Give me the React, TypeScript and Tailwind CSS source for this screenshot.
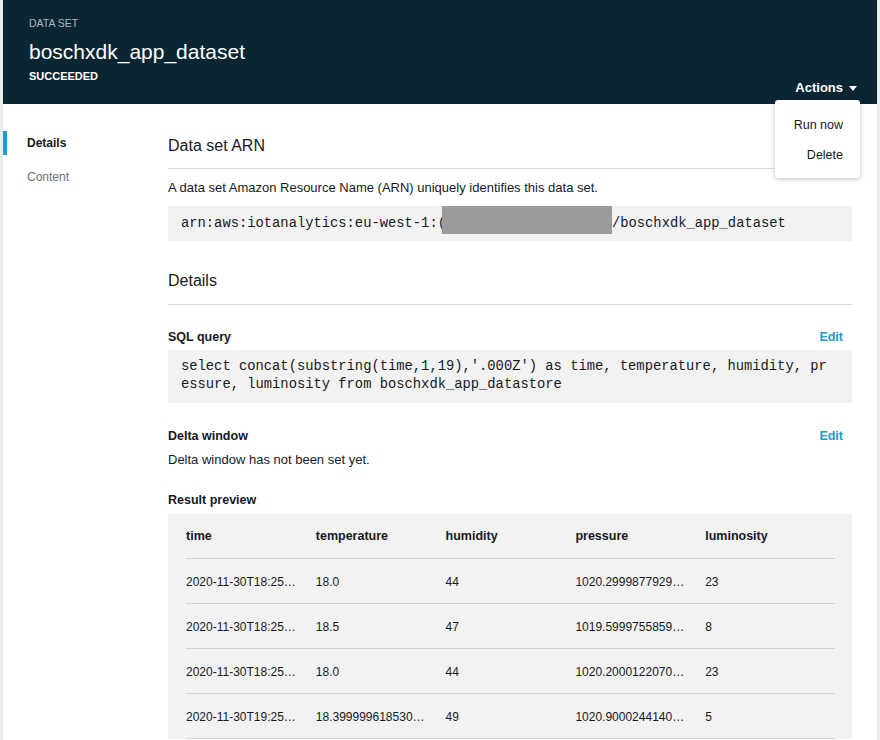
import React from "react";

const rows = [
  ["2020-11-30T18:25…", "18.0", "44", "1020.2999877929…", "23"],
  ["2020-11-30T18:25…", "18.5", "47", "1019.5999755859…", "8"],
  ["2020-11-30T18:25…", "18.0", "44", "1020.2000122070…", "23"],
  ["2020-11-30T19:25…", "18.399999618530…", "49", "1020.9000244140…", "5"],
];

const mono = { fontFamily: '"Liberation Mono", "Courier New", monospace' };

export default function App() {
  const sans = { fontFamily: '"Liberation Sans", Arial, sans-serif' };
  return (
    <div className="min-h-[740px] bg-[#eaeded] px-[3px] text-[#16191f]" style={sans}>
      <div className="relative min-h-[740px] bg-white">
        {/* Header */}
        <div className="relative h-[104px] bg-[#0b2633] pl-[26px] pr-[20px]">
          <div className="pt-[16px] text-[10.5px] leading-[14px] text-[#aab7b8]">DATA SET</div>
          <div className="mt-[8px] text-[21px] leading-[28px] text-white">boschxdk_app_dataset</div>
          <div className="mt-[3px] text-[11px] font-bold leading-[14px] text-white">SUCCEEDED</div>
          <div className="absolute bottom-[7px] right-[20px] flex items-center gap-[6px] text-[13px] font-bold leading-[18px] text-white">
            <span>Actions</span>
            <svg width="8" height="5" viewBox="0 0 8 5"><path d="M0 0h8L4 5z" fill="#fff" /></svg>
          </div>
        </div>

        {/* Dropdown menu */}
        <div className="absolute left-[772px] top-[100px] z-10 flex w-[85px] flex-col items-end rounded-[3px] bg-white pr-[17px] pt-[16px] pb-[14px] text-[12.5px] leading-[18px] shadow-[0_1px_5px_rgba(0,0,0,0.25)]">
          <div>Run now</div>
          <div className="mt-[12px]">Delete</div>
        </div>

        <div className="flex">
          {/* Side nav */}
          <div className="w-[165px] shrink-0 pt-[27px]">
            <div className="flex h-[24px] items-center">
              <div className="h-[24px] w-[4px] bg-[#1b9ccf]" />
              <span className="ml-[20px] text-[12px] font-bold">Details</span>
            </div>
            <div className="ml-[24px] mt-[13px] text-[12px] leading-[18px] text-[#687078]">Content</div>
          </div>

          {/* Main */}
          <div className="min-w-0 flex-1 pr-[25px] pt-[31px]">
            <div className="border-b border-[#d5dbdb] pb-[11px] text-[16px] leading-[22px]">Data set ARN</div>
            <div className="mt-[10px] text-[13px] leading-[18px]">
              A data set Amazon Resource Name (ARN) uniquely identifies this data set.
            </div>
            <div className="mt-[9px] flex h-[35px] items-center bg-[#f2f2f2] px-[13px] text-[13.8px] leading-[17px]" style={mono}>
              <span className="whitespace-pre">arn:aws:iotanalytics:eu-west-1:(</span>
              <span className="-ml-[4px] h-[28px] w-[170px] self-start bg-[#9b9b9b]" />
              <span className="whitespace-pre">/boschxdk_app_dataset</span>
            </div>

            <div className="mt-[29px] border-b border-[#d5dbdb] pb-[12px] text-[16px] leading-[22px]">Details</div>

            <div className="mt-[23px] flex items-center justify-between pr-[9px] text-[12.5px] leading-[18px]">
              <span className="font-bold">SQL query</span>
              <span className="font-bold text-[#1b9ccf]">Edit</span>
            </div>
            <div className="mt-[4px] bg-[#f2f2f2] px-[13px] pb-[9px] pt-[8px] text-[13.8px] leading-[18px]" style={mono}>
              <div className="whitespace-pre">select concat(substring(time,1,19),'.000Z') as time, temperature, humidity, pr</div>
              <div className="whitespace-pre">essure, luminosity from boschxdk_app_datastore</div>
            </div>

            <div className="mt-[24px] flex items-center justify-between pr-[9px] text-[12.5px] leading-[18px]">
              <span className="font-bold">Delta window</span>
              <span className="font-bold text-[#1b9ccf]">Edit</span>
            </div>
            <div className="mt-[6px] text-[13px] leading-[18px]">Delta window has not been set yet.</div>

            <div className="mt-[22px] text-[12.5px] font-bold leading-[18px]">Result preview</div>
            <div className="mt-[5px] bg-[#f2f2f2] pl-[18px] pr-[17px] text-[12.5px]">
              <div className="grid h-[45px] grid-cols-5 items-center border-b border-[#cfd4d4] font-bold">
                <div>time</div>
                <div>temperature</div>
                <div>humidity</div>
                <div>pressure</div>
                <div>luminosity</div>
              </div>
              {rows.map((r, i) => (
                <div key={i} className="grid h-[45px] grid-cols-5 items-center border-b border-[#cfd4d4] pt-[2px]">
                  {r.map((c, j) => (
                    <div key={j} className="min-w-0 whitespace-nowrap text-[12px]">{c}</div>
                  ))}
                </div>
              ))}
            </div>
          </div>
        </div>
      </div>
    </div>
  );
}
